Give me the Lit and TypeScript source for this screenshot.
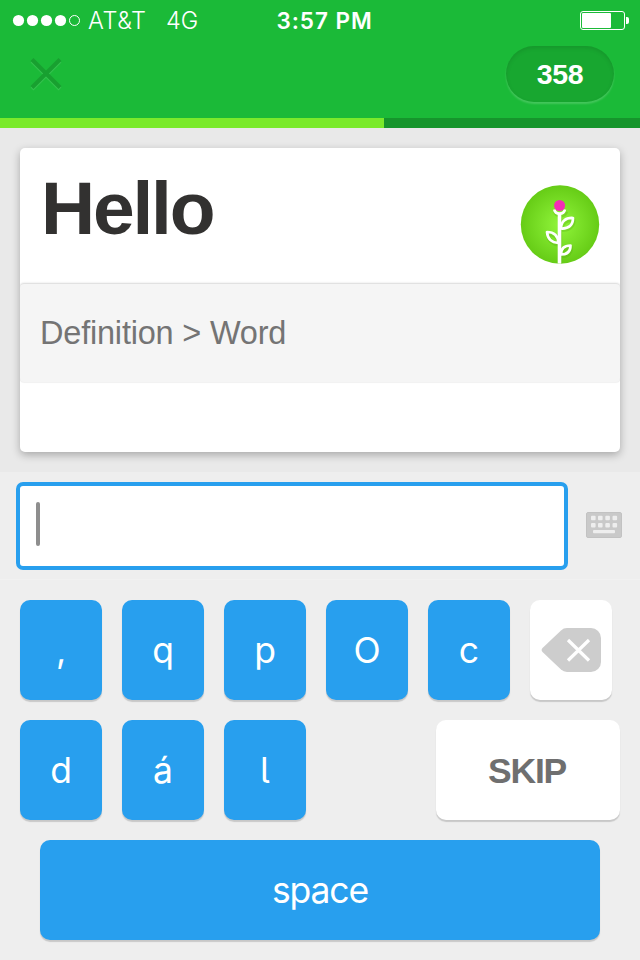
import { LitElement, html, css, svg } from "lit";
import { customElement, property } from "lit/decorators.js";

@customElement("status-bar")
class StatusBar extends LitElement {
  static styles = css`
    :host { display: flex; align-items: center; height: 40px; color: #fff; font: 400 23px/39px Inter, sans-serif; }
    .side { flex: 1; display: flex; align-items: center; white-space: nowrap; padding-top: 1px; height: 39px; }
    .dots { margin-left: 12px; flex: none; }
    .carrier { margin-left: 7px; width: 78px; font-weight: 300; font-size: 23.5px; letter-spacing: 0.6px; }
    .net { font-weight: 300; font-size: 23.5px; letter-spacing: 0; }
    .time { font-weight: 600; font-size: 22.5px; letter-spacing: 0.95px; margin-left: 9px; padding-top: 1px; white-space: nowrap; }
    .end { justify-content: flex-end; }
    .battery { margin-right: 10px; }
    svg { display: block; }
  `;
  render() {
    return html`
      <div class="side">
        <svg class="dots" width="69" height="15" viewBox="0 0 69 15">
          ${[6.5, 20.5, 34.5, 48.5].map((x) => svg`<circle cx=${x} cy="7.5" r="5.6" fill="#fff" />`)}
          <circle cx="62.5" cy="7.5" r="5" fill="none" stroke="#fff" stroke-width="1" />
        </svg>
        <span class="carrier">AT&amp;T</span>
        <span class="net">4G</span>
      </div>
      <div class="time">3:57 PM</div>
      <div class="side end">
        <svg class="battery" width="50" height="21" viewBox="0 0 50 21">
          <rect x="0.5" y="1.5" width="44" height="18" rx="2.5" fill="none" stroke="#fff" />
          <rect x="2" y="3" width="29" height="15" rx="1" fill="#fff" />
          <path d="M46 7h1a2 2 0 0 1 2 2v3a2 2 0 0 1-2 2h-1z" fill="#fff" />
        </svg>
      </div>
    `;
  }
}

@customElement("letter-key")
class LetterKey extends LitElement {
  @property() label = "";
  static styles = css`
    :host {
      display: flex; align-items: center; justify-content: center; box-sizing: border-box;
      width: 82px; height: 100px; border-radius: 10px; background: #289fee; color: #fff;
      box-shadow: 0 2px 1px rgba(0, 0, 0, 0.16);
      font: 400 35.5px/101px Inter, sans-serif; font-feature-settings: "cv05";
    }
  `;
  render() {
    return html`${this.label}`;
  }
}

@customElement("app-root")
class AppRoot extends LitElement {
  @property({ type: Number }) progress = 60;

  static styles = css`
    :host { display: block; width: 640px; height: 960px; overflow: hidden; background: #e9e9e9; font-family: "Liberation Sans", Arial, sans-serif; }
    svg { display: block; }
    .header { height: 118px; background: #1bba38; }
    .nav { display: flex; justify-content: space-between; padding: 6px 26px 0 28px; }
    .close { margin-top: 9px; }
    .score {
      width: 108px; height: 56px; border-radius: 28px; background: #18a730; color: #fff;
      text-align: center; font: bold 28.5px/56px "Liberation Sans", Arial, sans-serif; letter-spacing: -0.4px;
      box-shadow: 0 2px 2px rgba(255, 255, 255, 0.18), inset 0 2px 4px rgba(0, 0, 0, 0.1);
    }
    .track { height: 10px; background: #16952c; }
    .fill { height: 10px; background: #7aea2b; }
    .stage { display: flow-root; height: 344px; }
    .card { margin: 20px 20px 0; height: 304px; border-radius: 5px; background: #fff; box-shadow: 0 3px 9px rgba(0, 0, 0, 0.28); overflow: hidden; }
    .word { display: flex; justify-content: space-between; height: 136px; }
    .term { margin: 18px 0 0 21px; height: 85px; font-weight: bold; font-size: 75px; line-height: 85px; letter-spacing: -2.2px; color: #323130; }
    .plant { margin: 36px 20px 0 0; }
    .direction {
      height: 98px; padding-left: 20px; border-radius: 4px; background: #f5f5f5; color: #747474;
      font-size: 32.5px; line-height: 98px; letter-spacing: -0.2px;
      box-shadow: 0 -1px 2px rgba(0, 0, 0, 0.16), 0 1px 1px rgba(0, 0, 0, 0.05);
    }
    .answer { display: flex; align-items: flex-start; height: 108px; box-sizing: border-box; padding: 10px 18px 0 16px; background: #eee; border-bottom: 1px solid #f1f1f1; }
    .field { width: 552px; height: 88px; box-sizing: border-box; border: 4px solid #289fee; border-radius: 7px; background: #fff; padding: 16px; }
    .caret { width: 4px; height: 44px; border-radius: 2px; background: #8e8e8e; }
    .kbd { margin: 30px 0 0 18px; }
    .keys { height: 380px; box-sizing: border-box; padding: 20px 20px; background: #eee; display: flex; flex-direction: column; gap: 20px; }
    .row { display: flex; gap: 20px; height: 100px; }
    .white { display: flex; align-items: center; justify-content: center; height: 100px; border-radius: 10px; background: #fff; box-shadow: 0 2px 1px rgba(0, 0, 0, 0.16); }
    .delete { width: 82px; }
    .skip { width: 184px; margin-left: auto; color: #6f6f6f; font: bold 35.5px/100px "Liberation Sans", Arial, sans-serif; letter-spacing: -1.2px; }
    .skip span { padding: 2px 2px 0 0; }
    .space { width: 560px; margin: 0 20px; letter-spacing: -1.1px; }
  `;

  render() {
    return html`
      <div class="header">
        <status-bar></status-bar>
        <div class="nav">
          <svg class="close" width="36" height="36" viewBox="0 0 36 36" fill="none" stroke-width="4">
            <path d="M4 6l28 28M32 6l-28 28" stroke="#46c85e" stroke-opacity="0.6" />
            <path d="M4 4.500l28 28M32 4.500l-28 28" stroke="#18a030" />
          </svg>
          <div class="score">358</div>
        </div>
      </div>
      <div class="track"><div class="fill" style="width:${this.progress}%"></div></div>

      <div class="stage">
        <div class="card">
          <div class="word">
            <div class="term">Hello</div>
            <svg class="plant" width="80" height="80" viewBox="0 0 80 80">
              <defs>
                <radialGradient id="glow"><stop offset="0" stop-color="#91f53b" /><stop offset="1" stop-color="#66cc16" /></radialGradient>
                <clipPath id="disc"><circle cx="40" cy="40.500" r="39.200" /></clipPath>
              </defs>
              <circle cx="40" cy="40.500" r="39.200" fill="url(#glow)" />
              <g clip-path="url(#disc)" fill="none" stroke-linejoin="round">
                <g stroke="#54a911" stroke-opacity="0.3" stroke-width="4" transform="translate(0.6 1.6)">
                  <path d="M39.500 29V80M34.500 26c1 5 10 5 11 0M41 44c0-7 5-10 12-9.500c0 6-4 10-12 10M39 59c-7-.5-11-4-12-10.500c7 0 11.500 3.500 12 10.500M41 70.500c0-6 4-8.500 9.500-8.500c0 5-3 8.500-9.500 8.500" />
                </g>
                <path stroke="#fff" stroke-width="3.600" d="M39.500 29V80" />
                <path stroke="#fff" stroke-width="2.700" d="M34.300 25.500c1 5.500 9.600 5.500 10.600 0M41 44.500c0-7 4.500-11 12-10.500c0 7-4 11-12 10.500M38.500 59c-7-.5-11-4.500-11.500-11c7 0 11 4 11.500 11M41 70.500c0-6 3.500-9 9.500-9c0 5.500-3 9-9.500 9" />
              </g>
              <circle cx="39.600" cy="21.500" r="5.500" fill="#f42cb4" />
            </svg>
          </div>
          <div class="direction">Definition &gt; Word</div>
        </div>
      </div>

      <div class="answer">
        <div class="field"><div class="caret"></div></div>
        <svg class="kbd" width="36" height="26" viewBox="0 0 36 26">
          <rect x="0.500" y="0.500" width="35" height="25" rx="1.500" fill="#c9c9c9" stroke="#c2c2c2" />
          ${[3.7, 11].map((y) => [5, 12, 19.3, 26.5].map((x) => svg`<rect x=${x} y=${y} width="4.600" height="4.600" rx="1" fill="#eee" />`))}
          <rect x="7" y="18" width="22" height="3.300" rx="1" fill="#eee" />
        </svg>
      </div>

      <div class="keys">
        <div class="row">
          ${[",", "q", "p", "O", "c"].map((k) => html`<letter-key label=${k}></letter-key>`)}
          <div class="white delete">
            <svg width="60" height="44" viewBox="0 0 60 44">
              <path d="M26 0H50a10 10 0 0 1 10 10V34a10 10 0 0 1-10 10H26a9 9 0 0 1-6-2.400L1.500 24a3 3 0 0 1 0-4L20 2.400A9 9 0 0 1 26 0z" fill="#cdcdcd" />
              <path d="M27 12l21 20.500M48 12L27 32.500" stroke="#fff" stroke-width="3.200" />
            </svg>
          </div>
        </div>
        <div class="row">
          ${["d", "á", "l"].map((k) => html`<letter-key label=${k}></letter-key>`)}
          <div class="white skip"><span>SKIP</span></div>
        </div>
        <letter-key class="space" label="space"></letter-key>
      </div>
    `;
  }
}
